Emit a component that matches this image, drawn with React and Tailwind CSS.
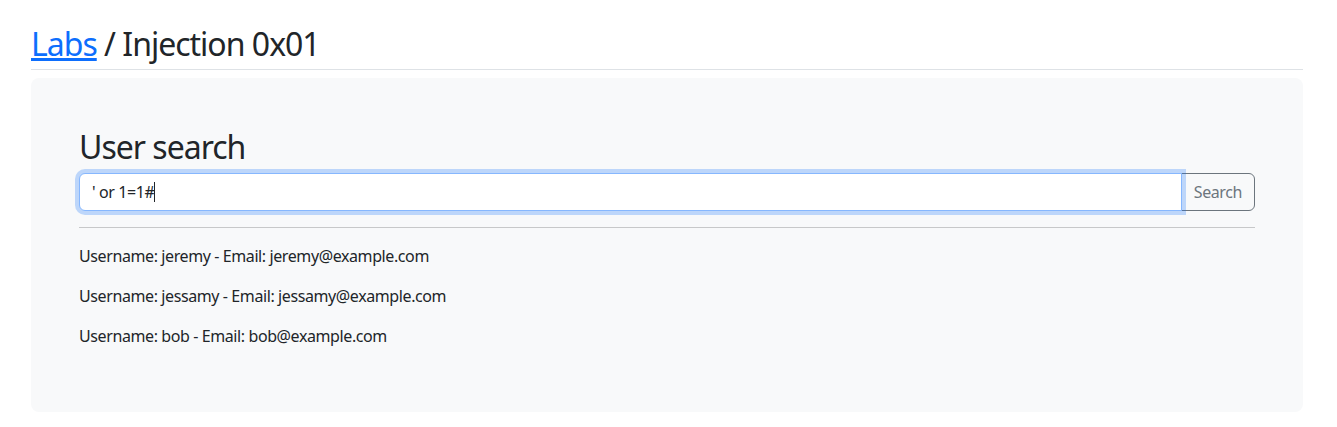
export default function App() {
  const rows = [
    "Username: jeremy - Email: jeremy@example.com",
    "Username: jessamy - Email: jessamy@example.com",
    "Username: bob - Email: bob@example.com",
  ];
  return (
    <div
      className="min-h-[427px] bg-white text-[#212529] pl-[31px] pr-[34px] pt-[23px] tracking-[-0.4px]"
      style={{ fontFamily: '"Noto Sans", sans-serif' }}
    >
      <div className="border-b border-[#dee2e6] pb-[8px] mb-[8px]">
        <h2 className="text-[32px] pt-[3px] leading-[35.4px] font-normal tracking-[-1px]">
          <a href="#" className="text-[#0d6efd] underline">Labs</a> / Injection 0x01
        </h2>
      </div>
      <div className="bg-[#f8f9fa] rounded-[8px] p-[48px]">
        <h2 className="text-[32px] pt-[3px] leading-[35.4px] font-normal mb-[8px] tracking-[-1px]">User search</h2>
        <div className="flex">
          <div className="flex-1 h-[38px] bg-white border border-[#86b7fe] rounded-l-[6px] shadow-[0_0_0_4px_rgba(13,110,253,0.25)] px-[12px] flex items-center text-[16px] relative z-10">
            <span>' or 1=1#</span>
            <span className="inline-block w-px h-[20px] bg-[#212529]"></span>
          </div>
          <button className="h-[38px] px-[12px] border border-[#6c757d] text-[#6c757d] rounded-r-[6px] text-[16px] bg-transparent -ml-px">
            Search
          </button>
        </div>
        <hr className="my-[16px] border-0 border-t border-[#c7c8c9]" />
        {rows.map((r) => (
          <p key={r} className="text-[16px] leading-[24px] mb-[16px]">{r}</p>
        ))}
      </div>
    </div>
  );
}
